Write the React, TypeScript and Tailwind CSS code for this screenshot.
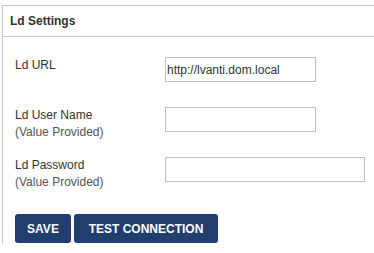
import React from "react";

export default function App() {
  const font = { fontFamily: '"Liberation Sans", Arial, sans-serif' };
  return (
    <div className="w-[374px] h-[253px] overflow-hidden bg-white" style={font}>
      <div className="mt-[5px] ml-[2px] border-l border-t border-[#c8c8c8] pb-[1px]">
        <div className="h-[31px] border-b border-[#c8c8c8] pl-[7px] flex items-center text-[12px] font-bold text-[#333] pb-[1px]">
          Ld Settings
        </div>
        <div className="pl-[12px] pt-[20px]">
          <div className="flex h-[50px] items-start">
            <div className="w-[150px] text-[12px] leading-[17px] text-[#333]">Ld URL</div>
            <input
              readOnly
              value="http://lvanti.dom.local"
              className="w-[151px] h-[25px] border border-[#c0c0c0] px-[1px] text-[12px] text-[#333] outline-none"
              style={font}
            />
          </div>
          <div className="flex h-[50px] items-start">
            <div className="w-[150px] text-[12px] leading-[17px] text-[#333]">
              <div>Ld User Name</div>
              <div className="text-[#555]">(Value Provided)</div>
            </div>
            <input
              readOnly
              value=""
              className="w-[151px] h-[25px] border border-[#c0c0c0] px-[1px] text-[12px] text-[#333] outline-none"
              style={font}
            />
          </div>
          <div className="flex h-[50px] items-start">
            <div className="w-[150px] text-[12px] leading-[17px] text-[#333]">
              <div>Ld Password</div>
              <div className="text-[#555]">(Value Provided)</div>
            </div>
            <input
              readOnly
              value=""
              className="w-[200px] h-[25px] border border-[#c0c0c0] px-[1px] text-[12px] text-[#333] outline-none"
              style={font}
            />
          </div>
          <div className="flex gap-[3px] mt-[7px]">
            <button className="w-[56px] h-[29px] rounded-[3px] bg-[#213e6e] text-white text-[12px] font-bold" style={font}>
              SAVE
            </button>
            <button className="w-[144px] h-[29px] rounded-[3px] bg-[#213e6e] text-white text-[12px] font-bold" style={font}>
              TEST CONNECTION
            </button>
          </div>
        </div>
      </div>
    </div>
  );
}
